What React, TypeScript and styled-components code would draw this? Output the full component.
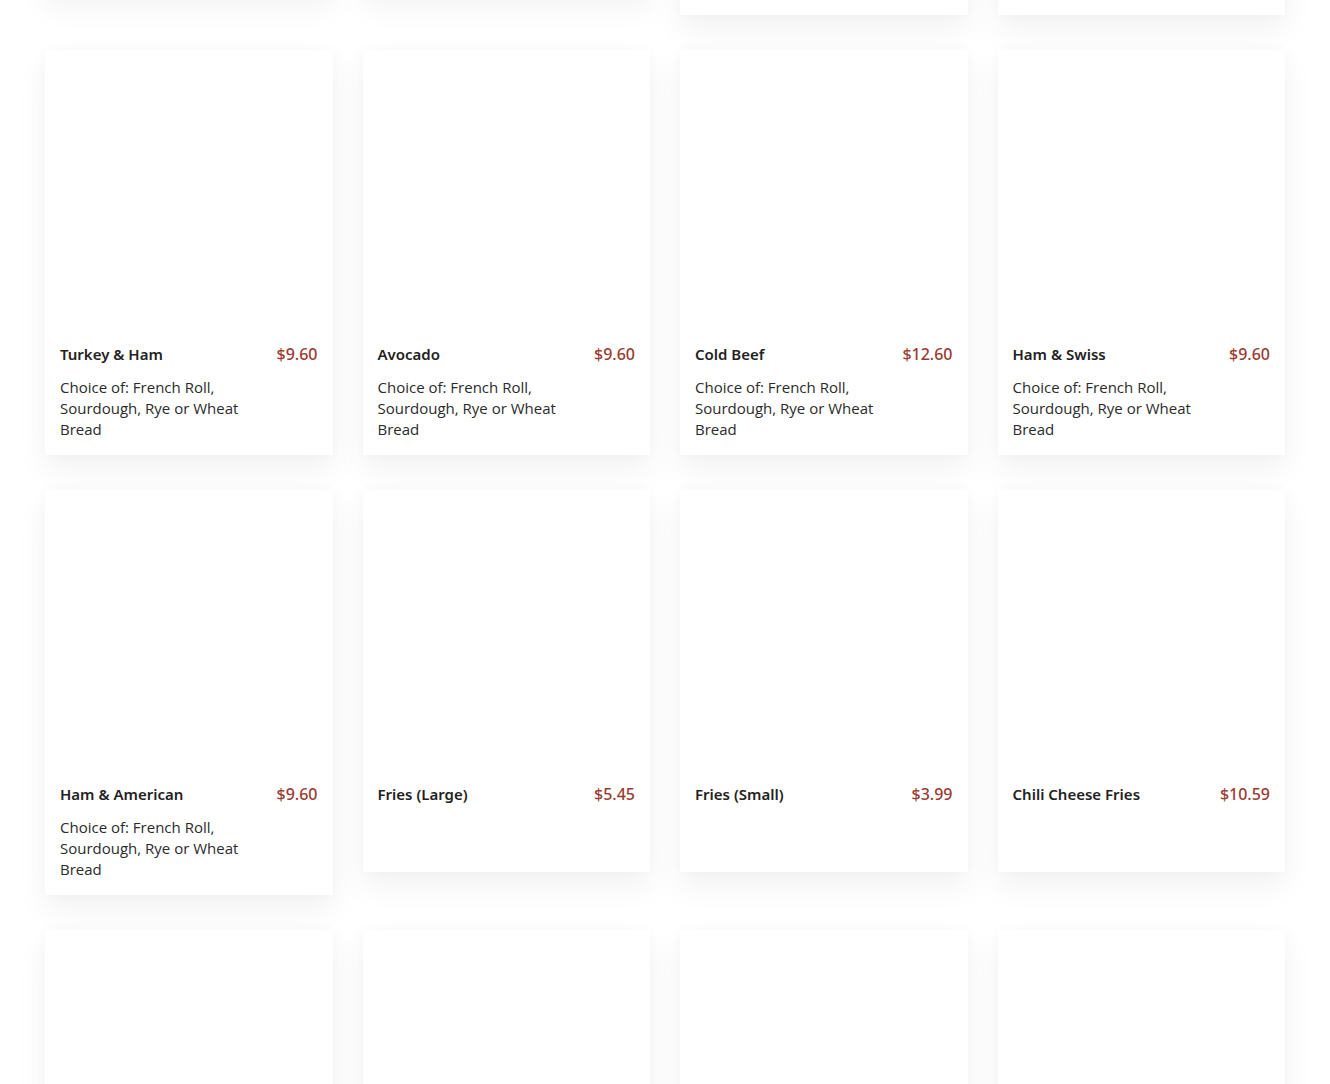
import styled, { createGlobalStyle } from 'styled-components';

const GlobalStyle = createGlobalStyle`
  * {
    box-sizing: border-box;
  }
  html, body {
    margin: 0;
    padding: 0;
    background: #ffffff;
    overflow: hidden;
  }
`;

// page is shown scrolled part-way down the menu
const MenuWrapper = styled.div`
  width: 1240px;
  margin: -390px auto 0;
`;

const MenuGrid = styled.div`
  display: grid;
  grid-template-columns: repeat(4, 1fr);
  column-gap: 30px;
  row-gap: 35px;
  align-items: start;
`;

const MenuCard = styled.div`
  background: #ffffff;
  box-shadow: 0 14px 30px rgba(0, 0, 0, 0.055), 0 0 12px rgba(0, 0, 0, 0.025);
`;

const MenuImage = styled.div`
  width: 100%;
  height: 280px;
  background: #ffffff;
`;

const MenuBody = styled.div`
  padding: 14px 15px 15px;
`;

const MenuHead = styled.div`
  display: flex;
  justify-content: space-between;
  align-items: center;
  height: 20px;
`;

const MenuName = styled.h3`
  margin: 0;
  font-family: 'Noto Sans', 'Open Sans', sans-serif;
  font-size: 15px;
  font-weight: 600;
  color: #222222;
`;

const MenuPrice = styled.span`
  font-family: 'Noto Sans', 'Open Sans', sans-serif;
  font-size: 16px;
  font-weight: 500;
  color: #9b3a30;
`;

const MenuDesc = styled.p`
  margin: 13px 0 0;
  min-height: 40px;
  max-width: 205px;
  font-family: 'Open Sans', 'Noto Sans', sans-serif;
  font-size: 15px;
  line-height: 21px;
  color: #2b2b2b;
`;

const breadChoice = 'Choice of: French Roll, Sourdough, Rye or Wheat Bread';

const items = [
  { name: 'Chicken Salad', price: '$9.60', desc: '' },
  { name: 'Tuna Salad', price: '$9.60', desc: '' },
  { name: 'Pastrami', price: '$12.60', desc: breadChoice },
  { name: 'Roast Beef', price: '$12.60', desc: breadChoice },
  { name: 'Turkey & Ham', price: '$9.60', desc: breadChoice },
  { name: 'Avocado', price: '$9.60', desc: breadChoice },
  { name: 'Cold Beef', price: '$12.60', desc: breadChoice },
  { name: 'Ham & Swiss', price: '$9.60', desc: breadChoice },
  { name: 'Ham & American', price: '$9.60', desc: breadChoice },
  { name: 'Fries (Large)', price: '$5.45', desc: '' },
  { name: 'Fries (Small)', price: '$3.99', desc: '' },
  { name: 'Chili Cheese Fries', price: '$10.59', desc: '' },
  { name: 'Onion Rings', price: '$5.45', desc: '' },
  { name: 'Side Salad', price: '$4.99', desc: '' },
  { name: 'Soda', price: '$2.25', desc: '' },
  { name: 'Cookie', price: '$1.99', desc: '' },
];

const App = () => {
  return (
    <>
      <GlobalStyle />
      <MenuWrapper>
        <MenuGrid>
          {items.map((item, i) => (
            <MenuCard key={i}>
              <MenuImage />
              <MenuBody>
                <MenuHead>
                  <MenuName>{item.name}</MenuName>
                  <MenuPrice>{item.price}</MenuPrice>
                </MenuHead>
                <MenuDesc>{item.desc}</MenuDesc>
              </MenuBody>
            </MenuCard>
          ))}
        </MenuGrid>
      </MenuWrapper>
    </>
  );
};

export default App;
